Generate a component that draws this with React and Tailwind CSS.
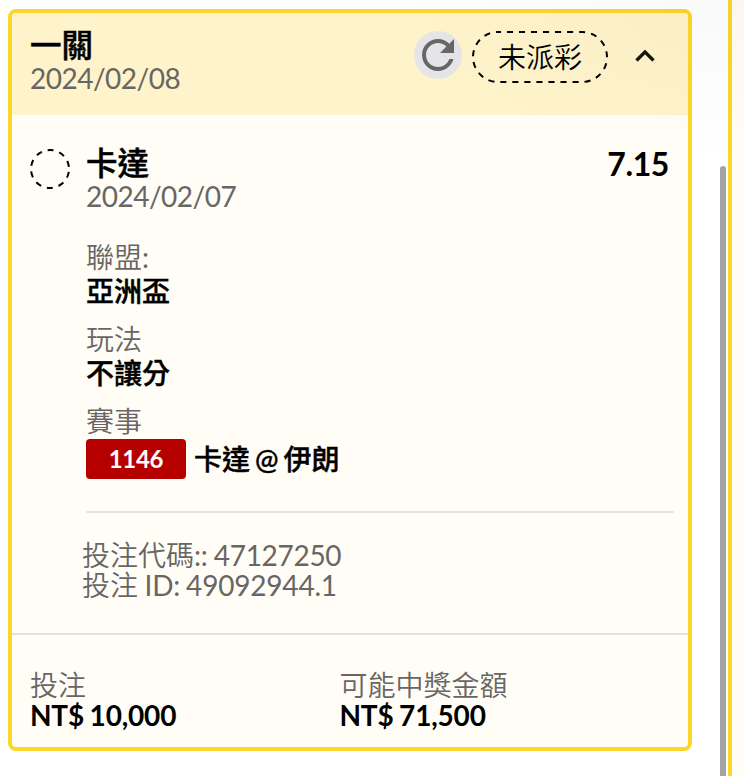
const sans = 'font-["Lato","Noto_Sans_CJK_TC",sans-serif]';

function Field({ label, value, suffix }) {
  return (
    <div className="mb-[18px]">
      <div className="h-8 font-[350] leading-8 text-[#686665]">
        {label}
        {suffix && <span className="font-normal">{suffix}</span>}
      </div>
      <div className="h-8 font-medium leading-9 text-black [-webkit-text-stroke:0.4px_black]">{value}</div>
    </div>
  );
}

function Amount({ label, value, className }) {
  return (
    <div className={className}>
      <div className="h-[30px] font-[350] leading-[30px] text-[#686665]">{label}</div>
      <div className="h-[30px] font-bold leading-[30px] tracking-[-0.2px] text-black [word-spacing:-1px]">{value}</div>
    </div>
  );
}

function Heading({ title, date }) {
  return (
    <div>
      <div className="h-[37px] text-[31.5px] font-medium leading-[39px] text-black [-webkit-text-stroke:0.5px_black]">{title}</div>
      <div className="h-[30px] leading-[31px] tracking-[-0.5px] text-[#686665]">{date}</div>
    </div>
  );
}

function RefreshIcon() {
  return (
    <svg className="size-12 shrink-0" viewBox="0 0 24 24">
      <circle cx="12" cy="12" r="12" fill="#e5e5e7" />
      <path
        fill="#666668"
        d="M17.650 6.350A7.958 7.958 0 0 0 12 4c-4.420 0-7.990 3.580-7.990 8s3.570 8 7.990 8c3.730 0 6.840-2.550 7.730-6h-2.080c-.82 2.330-3.040 4-5.650 4-3.310 0-6-2.690-6-6s2.690-6 6-6c1.660 0 3.140.69 4.220 1.780L13 11h7V4z"
      />
    </svg>
  );
}

export default function App() {
  return (
    <div className={`${sans} relative flex h-[776px] w-[744px] overflow-hidden bg-white text-[28px]`}>
      <main className="ml-2 mt-[9px] flex h-[742px] w-[684px] shrink-0 flex-col overflow-hidden rounded-lg border-4 border-[#fdd62b] bg-[#fffdf5]">
        <header className="flex h-[102px] shrink-0 bg-[#fff3cb] pl-[18px]">
          <div className="w-[384px] pt-[13px]">
            <Heading title="一關" date="2024/02/08" />
          </div>
          <div className="flex pt-[18px]">
            <RefreshIcon />
            <div className="relative ml-[10px] flex h-[52px] w-[136px] items-center justify-center">
              <svg className="absolute inset-0" width="136" height="52" viewBox="0 0 136 52" fill="none">
                <rect x="1" y="1" width="134" height="50" rx="25" stroke="#000" strokeWidth="2" strokeDasharray="6.100 5.940" strokeDashoffset="-8.900" />
              </svg>
              <span className="font-[350] leading-[54px] text-black">未派彩</span>
            </div>
            <svg className="ml-[17.5px] mt-[6px]" width="38" height="38" viewBox="0 0 24 24">
              <path fill="#151309" stroke="#151309" strokeWidth="0.200" d="m12 8-6 6 1.410 1.410L12 10.830l4.590 4.580L18 14z" />
            </svg>
          </div>
        </header>

        <section className="flex h-[518px] shrink-0 pl-[18px] pr-[14px]">
          <svg className="mt-[34px] shrink-0" width="40" height="40" viewBox="0 0 40 40" fill="none">
            <circle cx="20" cy="20" r="19" stroke="#000" strokeWidth="2" strokeDasharray="6 5.938" strokeDashoffset="-2.970" />
          </svg>
          <div className="ml-4 flex-1">
            <div className="flex justify-between pr-[5px] pt-[29px]">
              <Heading title="卡達" date="2024/02/07" />
              <div className="text-[32px] font-bold leading-[39px] tracking-[-0.4px] text-black">7.15</div>
            </div>
            <div className="pt-[30px]">
              <Field label="聯盟" suffix=":" value="亞洲盃" />
              <Field label="玩法" value="不讓分" />
              <div className="h-[34px] font-[350] leading-8 text-[#686665]">賽事</div>
            </div>
            <div className="flex h-10 items-center">
              <div className="h-10 w-[100px] rounded bg-[#b60000] text-center text-[24px] font-bold leading-[40px] tracking-[-0.3px] text-white">1146</div>
              <div className="ml-2 font-medium leading-[42px] text-black [-webkit-text-stroke:0.4px_black] [word-spacing:-2px]">卡達 @ 伊朗</div>
            </div>
            <div className="mt-8 h-0.5 bg-[#e5e3dc]" />
            <div className="-ml-1 pt-[27px] font-[350] leading-[30px] text-[#686665]">
              <div>投注代碼<span className="font-normal tracking-[-0.3px] [word-spacing:-0.5px]">:: 47127250</span></div>
              <div className="[word-spacing:-1px]">投注 <span className="font-normal tracking-[-0.2px]">ID: 49092944.1</span></div>
            </div>
          </div>
        </section>

        <footer className="flex flex-1 border-t-2 border-[#e5e3dc] pl-[18px] pt-[35px]">
          <Amount className="w-[309.5px]" label="投注" value="NT$ 10,000" />
          <Amount label="可能中獎金額" value="NT$ 71,500" />
        </footer>
      </main>
      <div className="ml-7 mt-[166px] w-1.5 shrink-0 rounded-t-full bg-[#a4a4a4]" />
      <div className="ml-0.5 w-4 shrink-0 border-l-4 border-[#fdd62b] bg-[#fffdf5]" />
      <div className="pointer-events-none absolute right-0 top-0 h-[170px] w-[360px] bg-[radial-gradient(ellipse_at_top_right,rgba(0,0,0,0.025),transparent_70%)]" />
    </div>
  );
}
